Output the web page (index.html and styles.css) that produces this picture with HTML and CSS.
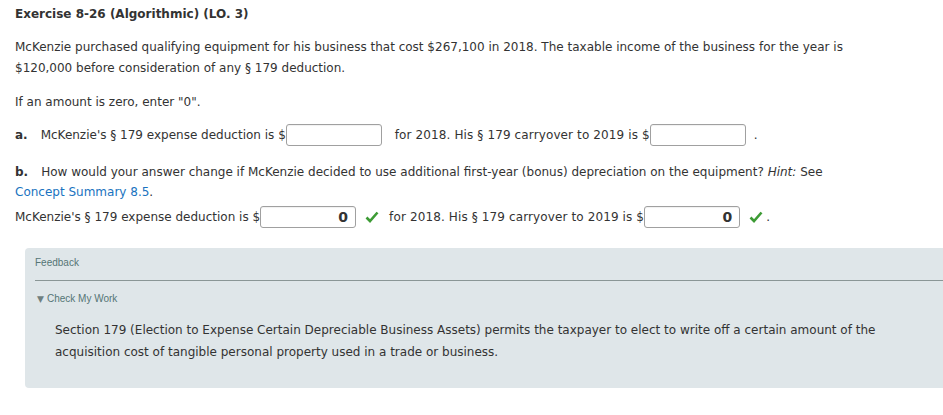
FILE: index.html
```html
<!DOCTYPE html>
<html>
<head>
<meta charset="utf-8">
<link rel="stylesheet" href="styles.css">
</head>
<body>
<div class="page">
  <h1 class="title">Exercise 8-26 (Algorithmic) (LO. 3)</h1>
  <p class="para">McKenzie purchased qualifying equipment for his business that cost $267,100 in 2018. The taxable income of the business for the year is $120,000 before consideration of any § 179 deduction.</p>
  <p class="para note">If an amount is zero, enter "0".</p>
  <div class="row row-a">
    <span class="lbl">a.</span>
    <span>McKenzie's § 179 expense deduction is $</span><span class="inp"></span>
    <span class="after">for 2018. His § 179 carryover to 2019 is $</span><span class="inp"></span>
    <span class="dot">.</span>
  </div>
  <p class="para q-b"><span class="lbl">b.</span>How would your answer change if McKenzie decided to use additional first-year (bonus) depreciation on the equipment? <i>Hint:</i> See <span class="link">Concept Summary 8.5</span>.</p>
  <div class="row row-b">
    <span>McKenzie's § 179 expense deduction is $</span><span class="inp filled">0</span>
    <svg class="check" viewBox="0 0 14 14" width="14" height="14"><path d="M1.5 7.5 L5 11 L12.5 2.5" fill="none" stroke="#3d9b35" stroke-width="2.6"/></svg>
    <span class="after2">for 2018. His § 179 carryover to 2019 is $</span><span class="inp filled">0</span>
    <svg class="check" viewBox="0 0 14 14" width="14" height="14"><path d="M1.5 7.5 L5 11 L12.5 2.5" fill="none" stroke="#3d9b35" stroke-width="2.6"/></svg>
    <span class="dot2">.</span>
  </div>
  <div class="feedback">
    <div class="fb-head">Feedback</div>
    <div class="fb-toggle"><span class="tri">▼</span>Check My Work</div>
    <p class="fb-text">Section 179 (Election to Expense Certain Depreciable Business Assets) permits the taxpayer to elect to write off a certain amount of the acquisition cost of tangible personal property used in a trade or business.</p>
  </div>
</div>
</body>
</html>
```

FILE: styles.css
```css
html, body {
  margin: 0;
  padding: 0;
  background: #fff;
}
.page {
  padding: 4px 0 0 15px;
  font-family: "DejaVu Sans", Verdana, sans-serif;
  font-size: 12px;
  color: #333;
}
.title {
  font-size: 12px;
  font-weight: bold;
  line-height: 21px;
  margin: 0;
  color: #333;
}
.para {
  margin: 12px 0 0 0;
  line-height: 21px;
  padding-right: 80px;
}
.note {
  margin-top: 13px;
}
.row {
  display: flex;
  align-items: center;
  height: 26px;
}
.row-a {
  margin-top: 9px;
}
.lbl {
  font-weight: bold;
  margin-right: 13px;
}
.inp {
  display: inline-block;
  box-sizing: border-box;
  width: 96px;
  height: 22px;
  border: 1px solid #a0a0a0;
  border-radius: 3px;
  background: #fff;
  box-shadow: inset 0 1px 1px rgba(0,0,0,0.06);
}
.filled {
  text-align: right;
  font-weight: bold;
  font-size: 14px;
  line-height: 20px;
  padding-right: 7px;
  color: #333;
}
.after {
  margin-left: 13px;
  letter-spacing: 0.12px;
}
.dot {
  margin-left: 8px;
}
.q-b {
  margin-top: 14px;
  line-height: 20px;
}
.link {
  color: #1a73c0;
}
.row-b {
  margin-top: 2px;
}
.check {
  margin-left: 9px;
}
.after2 {
  margin-left: 10px;
  letter-spacing: 0.12px;
}
.dot2 {
  margin-left: 3px;
}
.feedback {
  box-sizing: border-box;
  margin: 18px 0 0 10px;
  background: #dfe6e9;
  border-radius: 4px 0 0 4px;
  padding: 9px 0 0 10px;
  height: 140px;
}
.fb-head {
  font-family: "Liberation Sans", Arial, sans-serif;
  font-size: 10px;
  color: #557575;
  line-height: 12px;
  padding-bottom: 11px;
  border-bottom: 1px solid #8a9696;
}
.fb-toggle {
  font-family: "Liberation Sans", Arial, sans-serif;
  font-size: 10px;
  color: #557575;
  line-height: 12px;
  margin-top: 12px;
  padding-left: 2px;
}
.tri {
  font-family: "DejaVu Sans", sans-serif;
  font-size: 9px;
  margin-right: 3px;
  color: #6f7f7f;
}
.fb-text {
  margin: 14px 0 0 20px;
  line-height: 22px;
  color: #333;
  padding-right: 50px;
}
```
